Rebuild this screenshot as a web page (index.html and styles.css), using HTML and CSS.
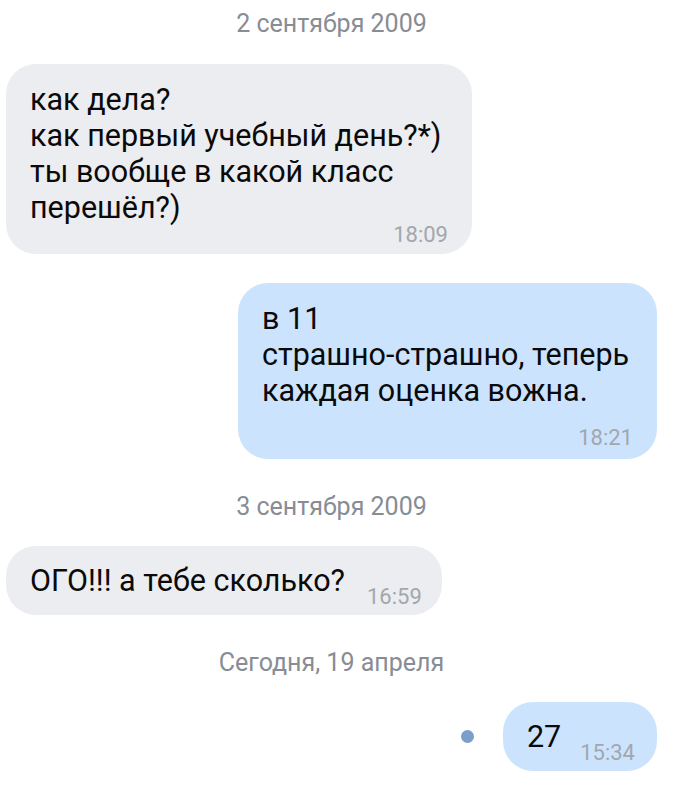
FILE: index.html
```html
<!DOCTYPE html>
<html lang="ru">
<head>
  <meta charset="UTF-8" />
  <meta name="viewport" content="width=device-width, initial-scale=1.0" />
  <title>Диалог</title>
  <link rel="stylesheet" href="styles.css">
</head>
<body>
  <div class="chat">
    <div class="day day-first">2 сентября 2009</div>

    <div class="row in">
      <div class="bubble gray b-multi">
        <div class="line">как дела?</div>
        <div class="line">как первый учебный день?*)</div>
        <div class="line">ты вообще в какой класс</div>
        <div class="line">перешёл?)</div>
        <div class="time t-overlap">18:09</div>
      </div>
    </div>

    <div class="row out">
      <div class="bubble blue b-multi b-wide">
        <div class="line">в 11</div>
        <div class="line">страшно-страшно, теперь</div>
        <div class="line">каждая оценка вожна.</div>
        <div class="time t-below">18:21</div>
      </div>
    </div>

    <div class="day">3 сентября 2009</div>

    <div class="row in">
      <div class="bubble gray b-single">
        <span class="text">ОГО!!! а тебе сколько?</span>
        <span class="time t-inline">16:59</span>
      </div>
    </div>

    <div class="day">Сегодня, 19 апреля</div>

    <div class="row out">
      <span class="unread"></span>
      <div class="bubble blue b-single b-short">
        <span class="text">27</span>
        <span class="time t-inline">15:34</span>
      </div>
    </div>
  </div>
</body>
</html>
```

FILE: styles.css
```css
body {
  margin: 0;
  background-color: #fff;
  font-family: Roboto, "Noto Sans", sans-serif;
  color: #0a0a0a;
}
.chat {
  width: 691px;
  height: 787px;
  box-sizing: border-box;
  padding: 10px 34px 0 6px;
  display: flex;
  flex-direction: column;
}
.day {
  text-align: center;
  font-size: 25px;
  line-height: 28px;
  color: #878c95;
  margin: 34px 0 25px;
}
.day-first {
  margin-top: 0;
  margin-bottom: 26px;
}
.row {
  display: flex;
  align-items: center;
}
.row.in {
  justify-content: flex-start;
}
.row.out {
  justify-content: flex-end;
  margin-top: 29px;
}
.bubble {
  border-radius: 30px;
  font-size: 30.5px;
  line-height: 36px;
  white-space: nowrap;
}
.gray {
  background-color: #ebedf0;
}
.blue {
  background-color: #cce3fd;
}
.b-multi {
  width: 466px;
  box-sizing: border-box;
  padding: 18px 24px 8px;
}
.b-wide {
  width: 419px;
  padding-bottom: 10px;
}
.b-single {
  display: flex;
  align-items: flex-end;
  gap: 22px;
  padding: 17px 20px 16px 24px;
}
.b-short {
  gap: 19px;
  padding-right: 22px;
}
.time {
  font-size: 22px;
  line-height: 22px;
  color: #a2a7ae;
}
.t-overlap {
  text-align: right;
  margin-top: -2px;
}
.t-below {
  text-align: right;
  margin-top: 18px;
}
.t-inline {
  position: relative;
  top: 9px;
}
.unread {
  width: 13px;
  height: 13px;
  border-radius: 50%;
  background-color: #7a9fcb;
  margin-right: 29px;
}
.day + .row.out {
  margin-top: 0;
}
```
